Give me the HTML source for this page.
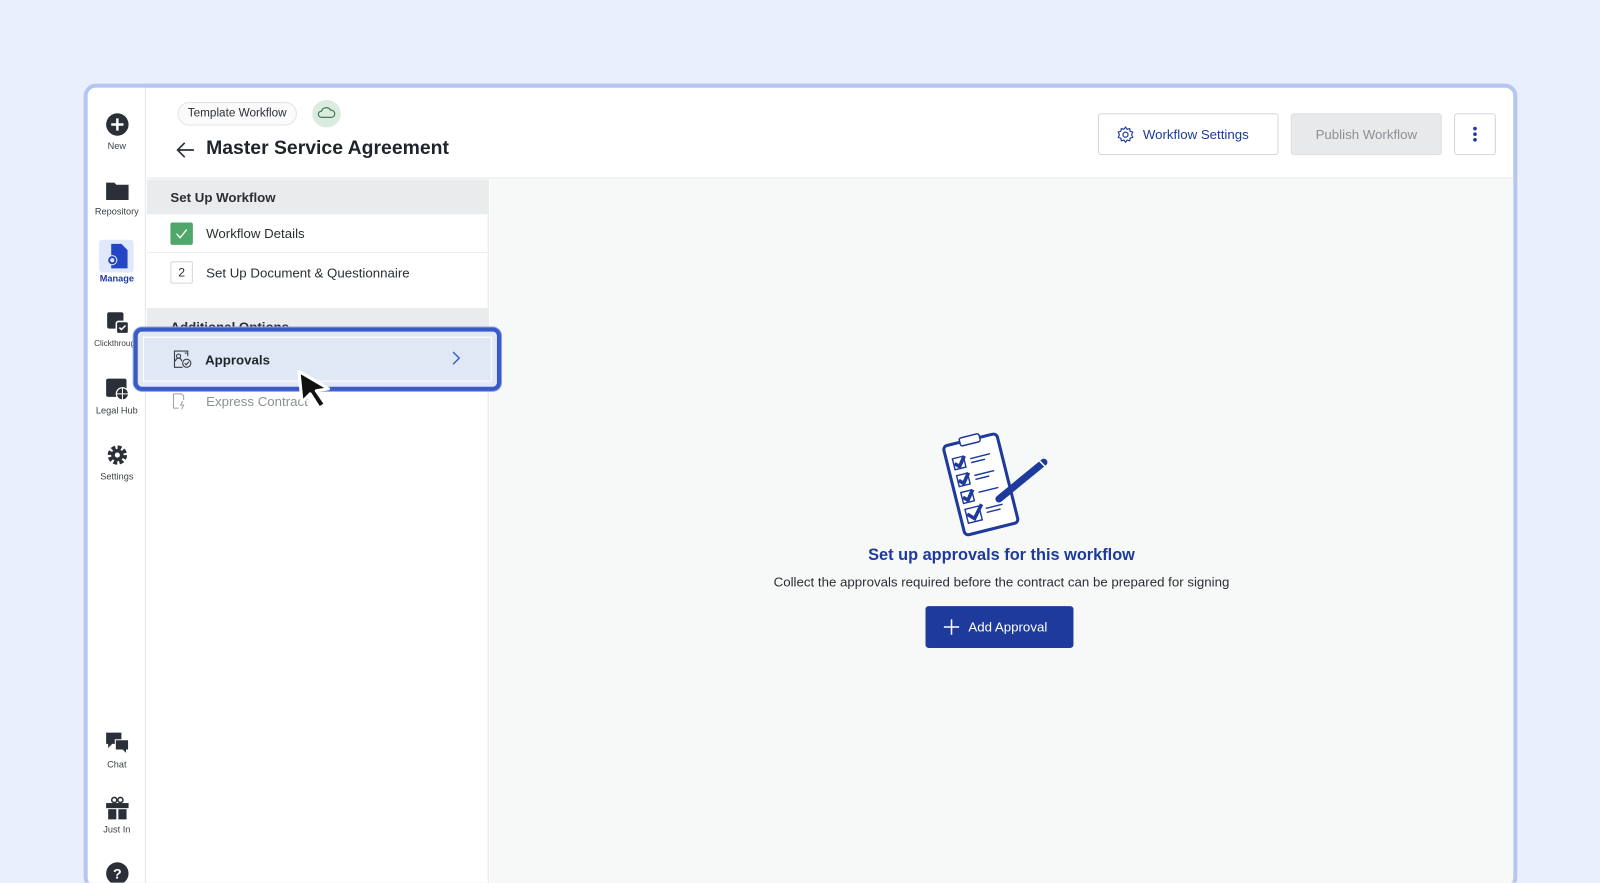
<!DOCTYPE html>
<html><head><meta charset="utf-8"><style>
*{box-sizing:border-box;margin:0;padding:0}
html,body{width:1600px;height:883px;overflow:hidden}
body{background:#e9effc;font-family:"Liberation Sans",sans-serif;color:#2a2f36;position:relative}
#w{position:absolute;left:0;top:0;width:1568px;height:865px;overflow:hidden;transform:scale(1.0204);transform-origin:0 0}
.card{position:absolute;left:82px;top:82px;width:1405px;height:790px;border:4px solid #b6c6f2;border-radius:12px;background:#fff;overflow:hidden}
.side{position:absolute;left:0;top:0;width:57px;height:100%;border-right:1px solid #e3e5e8;background:#fff}
.ni{position:absolute;left:0;width:57px;text-align:center;font-size:9px;color:#3a3f46}
.ni svg{display:block;margin:0 auto 4px}
.abs{position:absolute}
.hdr{position:absolute;left:58px;top:0;right:0;height:89px;border-bottom:1px solid #e3e5e8}
.panel{position:absolute;left:58px;top:90px;width:335px;bottom:0;border-right:1px solid #e3e5e8;background:#fff}
.main{position:absolute;left:394px;top:90px;right:0;bottom:0;background:#f7f8f8}
.sec{height:34px;background:#eaebed;font-weight:bold;font-size:13px;padding:10px 0 0 23px;color:#2a2f36}
.row{height:38px;font-size:13px;display:flex;align-items:center;padding-left:23px;border-bottom:1px solid #eceef0}
</style></head><body><div id="w">
<div class="card">
 <div class="side">
  <div class="ni" style="top:24px"><svg width="24" height="24" viewBox="0 0 24 24"><circle cx="12" cy="12" r="11" fill="#2b3038"/><path d="M12 6v12M6 12h12" stroke="#fff" stroke-width="2.4"/></svg>New</div>
  <div class="ni" style="top:90px"><svg width="24" height="22" viewBox="0 0 24 22"><path d="M1 3h8l2 2h12v15H1z" fill="#2b3038"/></svg>Repository</div>
  <div class="abs" style="left:11px;top:149px;width:34px;height:32px;background:#e1e8fb;border-radius:3px"></div>
  <div class="ni" style="top:152px;color:#1d3a9c;font-weight:bold"><svg width="24" height="26" viewBox="0 0 24 26"><path d="M6 1h10l6 6v18H6z" fill="#2446c4"/><circle cx="7" cy="17" r="5" fill="#e1e8fb"/><circle cx="7" cy="17" r="3" fill="none" stroke="#2446c4" stroke-width="2"/></svg>Manage</div>
  <div class="ni" style="top:218px;font-size:8px"><svg width="24" height="24" viewBox="0 0 24 24"><rect x="2" y="2" width="16" height="16" rx="2" fill="#2b3038"/><rect x="11" y="11" width="12" height="12" rx="2" fill="#2b3038" stroke="#fff" stroke-width="1.5"/><path d="M14 17l2 2 4-4" stroke="#fff" stroke-width="1.5" fill="none"/></svg>Clickthrough</div>
  <div class="ni" style="top:283px"><svg width="24" height="24" viewBox="0 0 24 24"><rect x="1" y="2" width="20" height="18" rx="2" fill="#2b3038"/><circle cx="17" cy="17" r="6" fill="#2b3038" stroke="#fff" stroke-width="1.3"/><path d="M11 17h12M17 11v12" stroke="#fff" stroke-width="1"/></svg>Legal Hub</div>
  <div class="ni" style="top:348px"><svg width="24" height="24" viewBox="0 0 24 24"><circle cx="12" cy="12" r="7" fill="none" stroke="#2b3038" stroke-width="5" stroke-dasharray="3.5 2"/><circle cx="12" cy="12" r="6" fill="#2b3038"/><circle cx="12" cy="12" r="2.5" fill="#fff"/></svg>Settings</div>
  <div class="ni" style="top:630px"><svg width="24" height="24" viewBox="0 0 24 24"><path d="M1 2h15v11H7l-4 4v-4H1z" fill="#2b3038"/><path d="M10 9h13v10h-2v4l-4-4h-7z" fill="#2b3038" stroke="#fff" stroke-width="1"/></svg>Chat</div>
  <div class="ni" style="top:694px"><svg width="24" height="24" viewBox="0 0 24 24"><circle cx="9" cy="4" r="2.5" fill="none" stroke="#2b3038" stroke-width="1.5"/><circle cx="15" cy="4" r="2.5" fill="none" stroke="#2b3038" stroke-width="1.5"/><rect x="1" y="7" width="22" height="5" fill="#2b3038"/><rect x="3" y="13" width="8" height="10" fill="#2b3038"/><rect x="13" y="13" width="8" height="10" fill="#2b3038"/></svg>Just In</div>
  <div class="ni" style="top:758px"><svg width="24" height="24" viewBox="0 0 24 24"><circle cx="12" cy="12" r="11" fill="#2b3038"/><text x="12" y="17" font-size="14" font-weight="bold" text-anchor="middle" fill="#fff" font-family="Liberation Sans">?</text></svg></div>
 </div>
 <div class="hdr">
  <div class="abs" style="left:30px;top:14px;height:23px;padding:0 9px;border:1px solid #e1e3e6;border-radius:12px;font-size:11.5px;line-height:21px;color:#2a2f36;background:#fbfbfb">Template Workflow</div>
  <div class="abs" style="left:162px;top:12px;width:28px;height:27px;border-radius:50%;background:#dcebe0"><svg width="28" height="27" viewBox="0 0 28 27"><path d="M9 17a3 3 0 010-6 5 5 0 019-1 3.5 3.5 0 011 7z" fill="none" stroke="#3f7d55" stroke-width="1.2"/></svg></div>
  <svg class="abs" style="left:28px;top:52px" width="20" height="18" viewBox="0 0 20 18"><path d="M18 9H3M9 2L2 9l7 7" fill="none" stroke="#2a2f36" stroke-width="1.6"/></svg>
  <div class="abs" style="left:58px;top:49px;font-size:19px;font-weight:bold;color:#1f242b">Master Service Agreement</div>
  <div class="abs" style="left:932px;top:25px;width:177px;height:41px;border:1px solid #d3d6da;border-radius:3px;font-size:13px;color:#1d3a9c;line-height:39px;padding-left:43px">Workflow Settings
   <svg class="abs" style="left:17px;top:11px" width="18" height="18" viewBox="0 0 24 24"><circle cx="12" cy="12" r="3.3" fill="none" stroke="#1d3a9c" stroke-width="1.6"/><path d="M12 2l2 3 3.5-1 .5 3.5 3.5 1-1.5 3.5 1.5 3.5-3.5 1-.5 3.5-3.5-1-2 3-2-3-3.5 1-.5-3.5-3.5-1L4 12 2.5 8.5l3.5-1L6.5 4 10 5z" fill="none" stroke="#1d3a9c" stroke-width="1.5" stroke-linejoin="round"/></svg></div>
  <div class="abs" style="left:1121px;top:25px;width:148px;height:41px;background:#e8e9eb;border:1px solid #dcdee1;border-radius:3px;font-size:13px;color:#8b9097;line-height:39px;text-align:center">Publish Workflow</div>
  <div class="abs" style="left:1281px;top:25px;width:41px;height:41px;border:1px solid #d3d6da;border-radius:3px"><svg width="39" height="39" viewBox="0 0 39 39"><circle cx="19.5" cy="14" r="1.8" fill="#1d3a9c"/><circle cx="19.5" cy="19.5" r="1.8" fill="#1d3a9c"/><circle cx="19.5" cy="25" r="1.8" fill="#1d3a9c"/></svg></div>
 </div>
 <div class="panel">
  <div class="sec">Set Up Workflow</div>
  <div class="row"><span style="width:22px;height:22px;background:#4fa86a;border-radius:2px;margin-right:13px;display:inline-block;position:relative"><svg width="22" height="22" viewBox="0 0 22 22"><path d="M6 11l3.5 4L16 7" fill="none" stroke="#fff" stroke-width="1.3"/></svg></span>Workflow Details</div>
  <div class="row" style="border:none"><span style="width:22px;height:22px;border:1px solid #d3d6da;border-radius:2px;margin-right:13px;display:inline-block;text-align:center;font-size:12px;line-height:20px">2</span>Set Up Document &amp; Questionnaire</div>
  <div style="height:16px"></div>
  <div class="sec" style="height:36px;padding-top:11px">Additional Options</div>
  <div class="row" style="color:#8b9097;margin-top:36px;border:none"><svg width="18" height="18" viewBox="0 0 18 18" style="margin-right:17px"><path d="M3 2h8l2 2v4M3 2v14h5" fill="none" stroke="#9aa0a6" stroke-width="1"/><path d="M12 9l-2 4h3l-2 4" fill="none" stroke="#9aa0a6" stroke-width="1"/></svg>Express Contract</div>
 </div>
 <div class="main">
  <svg class="abs" style="left:440px;top:248px" width="110" height="104" viewBox="0 0 110 104">
   <g transform="rotate(-14 40 50)"><rect x="14" y="6" width="54" height="90" rx="4" fill="#fff" stroke="#1d3a9c" stroke-width="3"/><rect x="31" y="2" width="20" height="8" rx="2" fill="#fff" stroke="#1d3a9c" stroke-width="1.5"/>
   <g fill="none" stroke="#1d3a9c" stroke-width="1.4"><rect x="20" y="20" width="11" height="11"/><rect x="20" y="37" width="11" height="11"/><rect x="20" y="54" width="11" height="11"/><rect x="20" y="71" width="14" height="14"/><path d="M37 24h20M37 28h14M37 41h20M37 45h14M37 58h20M40 75h17M40 79h14"/></g>
   <g fill="none" stroke="#1d3a9c" stroke-width="3.5"><path d="M21 25l4 4 7-9M21 42l4 4 7-9M21 59l4 4 7-9M21 76l6 6 10-12"/></g></g>
   <path d="M59 65l44-36" stroke="#1d3a9c" stroke-width="7" stroke-linecap="round"/><path d="M98 27l6 6" stroke="#fff" stroke-width="1.5"/></svg>
  <div class="abs" style="left:0;width:1003px;top:360px;text-align:center;font-size:16px;font-weight:bold;color:#1d3a9c">Set up approvals for this workflow</div>
  <div class="abs" style="left:0;width:1003px;top:387px;text-align:center;font-size:13px;color:#2a2f36">Collect the approvals required before the contract can be prepared for signing</div>
  <div class="abs" style="left:427px;top:418px;width:145px;height:41px;background:#1d3a9c;border-radius:3px;color:#fff;font-size:13px;line-height:41px;padding-left:42px"><svg class="abs" style="left:17px;top:12px" width="17" height="17" viewBox="0 0 17 17"><path d="M8.5 1v15M1 8.5h15" stroke="#fff" stroke-width="1.5"/></svg>Add Approval</div>
 </div>
</div>
<div class="abs" style="left:131px;top:321px;width:360px;height:62px;border:4px solid #3a5ac8;border-radius:8px;background:#e2e9f6;box-shadow:0 0 0 1px #8da4e4">
 <div class="abs" style="left:5px;top:5px;right:5px;bottom:5px;background:#e1e8f5;border:1px solid #fff"></div>
 <svg class="abs" style="left:34px;top:17px" width="20" height="20" viewBox="0 0 20 20"><g fill="none" stroke="#3a3f46" stroke-width="1.1"><path d="M11 2H2v16h8"/><circle cx="6" cy="7" r="2"/><path d="M3 12a3 3 0 016 0M11 2h4v5M12 4h2"/><circle cx="14" cy="14" r="4"/><path d="M12 14l1.5 1.5 2.5-3"/></g></svg>
 <div class="abs" style="left:66px;top:20px;font-size:13px;font-weight:bold;color:#1f242b">Approvals</div>
 <svg class="abs" style="left:307px;top:18px" width="10" height="16" viewBox="0 0 10 16"><path d="M2 2l6 6-6 6" fill="none" stroke="#3a5ac8" stroke-width="1.4"/></svg>
</div>
<svg class="abs" style="left:289px;top:361px" width="44" height="46" viewBox="0 0 44 46"><path d="M4 3l3 30 8-8 9 14 6-4-9-13 12-2z" fill="#111" stroke="#fff" stroke-width="3" stroke-linejoin="round"/></svg>
</div></body></html>
